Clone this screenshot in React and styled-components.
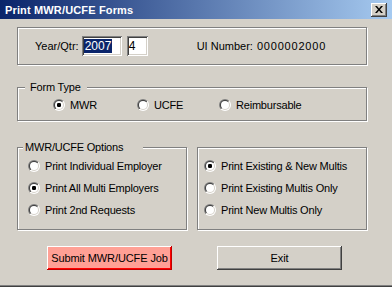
import React, { useId } from "react";
import styled, { createGlobalStyle } from "styled-components";

const GlobalStyle = createGlobalStyle`
  html, body { margin: 0; padding: 0; background: #d4d0c8; }
  body {
    font-family: "Liberation Sans", Arial, sans-serif;
    font-size: 11px;
    color: #000;
  }
`;

const Window = styled.div`
  width: 392px;
  height: 287px;
  box-sizing: border-box;
  background: #d4d0c8;
  display: flex;
  flex-direction: column;
  border-bottom: 1px solid #404040;
  box-shadow: inset 0 -1px 0 #808080;
`;

const TitleBar = styled.div`
  height: 19px;
  flex: none;
  display: flex;
  align-items: center;
  justify-content: space-between;
  padding: 0 5px 0 5px;
  background: linear-gradient(to right, #0a246a 0%, #a6caf0 100%);
`;

const TitleText = styled.span`
  color: #fff;
  font-weight: bold;
  font-size: 11px;
  letter-spacing: 0.15px;
`;

const CloseButton = styled.div`
  width: 16px;
  height: 14px;
  box-sizing: border-box;
  background: #d4d0c8;
  display: flex;
  align-items: center;
  justify-content: center;
  box-shadow: inset -1px -1px 0 #404040, inset 1px 1px 0 #fff,
    inset -2px -2px 0 #808080, inset 2px 2px 0 #d4d0c8;
`;

const Body = styled.div`
  display: flex;
  flex-direction: column;
  padding: 8px 25px 0 17px;
`;

const GroupBox = styled.div`
  position: relative;
  box-sizing: border-box;
  width: ${(p) => p.$w || "350px"};
  height: ${(p) => p.$h};
  margin-top: ${(p) => p.$mt || "0"};
  border: 1px solid #808080;
  box-shadow: inset 1px 1px 0 #fff, 1px 1px 0 #fff;
  display: flex;
  flex-direction: ${(p) => (p.$col ? "column" : "row")};
  align-items: ${(p) => (p.$col ? "flex-start" : "center")};
  padding: ${(p) => p.$pad || "0"};
`;

const Legend = styled.span`
  position: absolute;
  top: -7px;
  left: ${(p) => p.$left};
  width: ${(p) => p.$width};
  box-sizing: border-box;
  padding-left: ${(p) => p.$padLeft};
  height: 13px;
  line-height: 13px;
  background: #d4d0c8;
  white-space: nowrap;
  letter-spacing: -0.2px;
`;

const Label = styled.span`
  white-space: nowrap;
  letter-spacing: ${(p) => p.$ls || "-0.2px"};
  margin-left: ${(p) => p.$ml || "0"};
`;

const Field = styled.div`
  box-sizing: border-box;
  width: ${(p) => p.$w};
  height: 20px;
  margin-left: ${(p) => p.$ml || "0"};
  background: #fff;
  display: flex;
  align-items: center;
  padding-left: 2px;
  font-size: 12px;
  box-shadow: inset 1px 1px 0 #808080, inset -1px -1px 0 #fff,
    inset 2px 2px 0 #404040, inset -2px -2px 0 #d4d0c8;
`;

const Selected = styled.span`
  background: #0a246a;
  color: #fff;
  line-height: 14px;
  padding: 0 1px;
`;

const RadioRow = styled.div`
  display: flex;
  align-items: center;
  gap: 5px;
  height: ${(p) => p.$h || "auto"};
  width: ${(p) => p.$w || "auto"};
  flex: none;
`;

const Columns = styled.div`
  display: flex;
  gap: 10px;
  margin-top: 26px;
`;

const ButtonBar = styled.div`
  display: flex;
  gap: 45px;
  margin-top: 16px;
  padding-left: 30px;
`;

const Button = styled.div`
  width: 125px;
  height: 24px;
  box-sizing: border-box;
  display: flex;
  align-items: center;
  justify-content: center;
  font-size: 11px;
  letter-spacing: -0.1px;
  white-space: nowrap;
  background: ${(p) => (p.$danger ? "#ffa095" : "#d4d0c8")};
  box-shadow: ${(p) =>
    p.$danger
      ? "inset -1px -1px 0 #c00000, inset 1px 1px 0 #fff, inset -2px -2px 0 #ff0000, inset 2px 2px 0 #ffa095"
      : "inset -1px -1px 0 #404040, inset 1px 1px 0 #fff, inset -2px -2px 0 #808080, inset 2px 2px 0 #d4d0c8"};
`;

function Radio({ checked }) {
  const id = useId().replace(/:/g, "");
  return (
    <svg width="12" height="12" viewBox="0 0 12 12" style={{ flex: "none" }}>
      <defs>
        <linearGradient id={`o${id}`} x1="0" y1="0" x2="1" y2="1">
          <stop offset="0.5" stopColor="#808080" />
          <stop offset="0.5" stopColor="#ffffff" />
        </linearGradient>
        <linearGradient id={`i${id}`} x1="0" y1="0" x2="1" y2="1">
          <stop offset="0.5" stopColor="#404040" />
          <stop offset="0.5" stopColor="#d4d0c8" />
        </linearGradient>
      </defs>
      <circle cx="6" cy="6" r="6" fill={`url(#o${id})`} />
      <circle cx="6" cy="6" r="5" fill={`url(#i${id})`} />
      <circle cx="6" cy="6" r="4" fill="#fff" />
      {checked && <rect x="4" y="4" width="4" height="4" rx="1.2" fill="#000" />}
    </svg>
  );
}

function RadioOption({ label, checked, w, h }) {
  return (
    <RadioRow $w={w} $h={h}>
      <Radio checked={checked} />
      <Label>{label}</Label>
    </RadioRow>
  );
}

export default function App() {
  return (
    <>
      <GlobalStyle />
      <Window>
        <TitleBar>
          <TitleText>Print MWR/UCFE Forms</TitleText>
          <CloseButton>
            <svg width="8" height="7" viewBox="0 0 8 7">
              <path d="M0 0h2l2 2.5L6 0h2L5 3.5 8 7H6L4 4.5 2 7H0l3-3.5z" fill="#000" />
            </svg>
          </CloseButton>
        </TitleBar>
        <Body>
          <GroupBox $h="38px" $pad="0 0 0 17px">
            <Label $ls="0">Year/Qtr:</Label>
            <Field $w="40px" $ml="3px">
              <Selected>2007</Selected>
            </Field>
            <Field $w="21px" $ml="5px">4</Field>
            <Label $ls="0" $ml="49px">UI Number:</Label>
            <Label $ls="0.8px" $ml="4px">0000002000</Label>
          </GroupBox>

          <GroupBox $h="34px" $mt="22px" $pad="2px 0 0 35px">
            <Legend $left="7px" $width="62px" $padLeft="5px">Form Type</Legend>
            <RadioOption label="MWR" checked w="84px" />
            <RadioOption label="UCFE" w="82px" />
            <RadioOption label="Reimbursable" />
          </GroupBox>

          <Columns>
            <GroupBox $w="170px" $h="83px" $col $pad="7px 0 0 10px">
              <Legend $left="5px" $width="120px" $padLeft="2px">MWR/UCFE Options</Legend>
              <RadioOption label="Print Individual Employer" h="22px" />
              <RadioOption label="Print All Multi Employers" checked h="22px" />
              <RadioOption label="Print 2nd Requests" h="22px" />
            </GroupBox>
            <GroupBox $w="170px" $h="83px" $col $pad="7px 0 0 6px">
              <RadioOption label="Print Existing & New Multis" checked h="22px" />
              <RadioOption label="Print Existing Multis Only" h="22px" />
              <RadioOption label="Print New Multis Only" h="22px" />
            </GroupBox>
          </Columns>

          <ButtonBar>
            <Button $danger>Submit MWR/UCFE Job</Button>
            <Button>Exit</Button>
          </ButtonBar>
        </Body>
      </Window>
    </>
  );
}
